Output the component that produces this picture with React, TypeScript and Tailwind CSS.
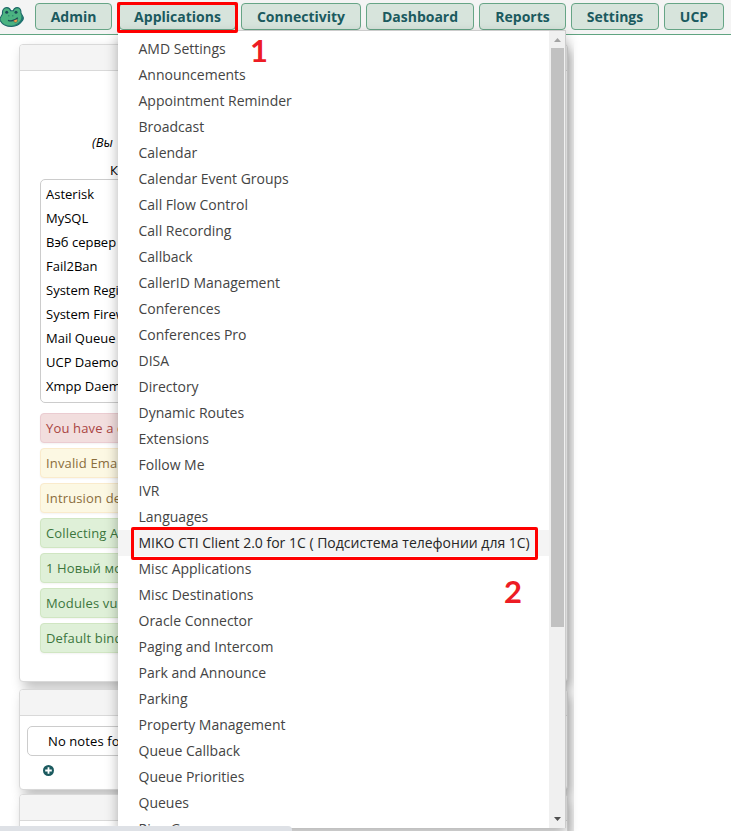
import React from "react";

const tabs = [
  { label: "Admin", width: "w-[77px]" },
  { label: "Applications", width: "w-[117px] ml-[2px]" },
  { label: "Connectivity", width: "w-[120px]" },
  { label: "Dashboard", width: "w-[108px]" },
  { label: "Reports", width: "w-[87px]" },
  { label: "Settings", width: "w-[88px]" },
  { label: "UCP", width: "w-[60px]" },
];

const modules = [
  "AMD Settings", "Announcements", "Appointment Reminder", "Broadcast", "Calendar",
  "Calendar Event Groups", "Call Flow Control", "Call Recording", "Callback",
  "CallerID Management", "Conferences", "Conferences Pro", "DISA", "Directory",
  "Dynamic Routes", "Extensions", "Follow Me", "IVR", "Languages",
  "MIKO CTI Client 2.0 for 1C ( Подсистема телефонии для 1С)", "Misc Applications",
  "Misc Destinations", "Oracle Connector", "Paging and Intercom", "Park and Announce",
  "Parking", "Property Management", "Queue Callback", "Queue Priorities", "Queues",
  "Ring Groups",
];

const services = [
  "Asterisk", "MySQL", "Вэб сервер", "Fail2Ban", "System Regi",
  "System Firew", "Mail Queue", "UCP Daemo", "Xmpp Daem",
];

const danger = "bg-[#f2dede] border-[#ebccd1] text-[#a94442]";
const warning = "bg-[#fcf8e3] border-[#faebcc] text-[#8a6d3b]";
const success = "bg-[#dff0d8] border-[#d0e6c2] text-[#3c763d]";

const alerts = [
  { text: "You have a d", tone: danger },
  { text: "Invalid Ema", tone: warning },
  { text: "Intrusion de", tone: warning },
  { text: "Collecting A", tone: success },
  { text: "1 Новый мо", tone: success },
  { text: "Modules vu", tone: success },
  { text: "Default bind", tone: success },
];

function Frog() {
  return (
    <svg className="block h-[24px] w-[25px]" viewBox="0 0 25 24">
      <path
        d="M2.5 9C2 5 4 2.6 6.800 2.600c2.200 0 3.400 1.400 3.900 3.200h2.600c.5-2 1.700-3.200 3.900-3.200 2.800 0 4 2.500 3.700 5.400l2.300 4.300c.3 1-.2 2.500-1 3.500-2.200 3.300-5.700 5.600-10.700 5.600C6.300 21.400 2 19 .2 15.400-.3 14 .2 12.500 1 11.500z"
        fill="#4bb381" stroke="#1d6668" strokeWidth="1.100"
      />
      <path d="M20.500 9c1.200 2 1.200 4 .2 6-1.600 3-4.400 4.600-8.700 5.600 5.500.2 9-2 10.700-5.300.6-1.200.5-2.200-.1-3.300z" fill="#1f7470" />
      <circle cx="6.700" cy="7.200" r="1.500" fill="#1b4a57" />
      <circle cx="16" cy="7.200" r="1.500" fill="#1b4a57" />
      <path d="M8.300 10.800h1M12.300 10.800h1" stroke="#1d6668" strokeWidth="1" />
      <path d="M8 15.300c3.500 1.200 7 .3 9.800-2.600" fill="none" stroke="#1b4a57" strokeWidth="1.300" />
      <path d="M13.400 15.400l3.600-1.500c1.100 1.700 0 3.700-1.600 3.500-1-.1-1.700-.9-2-2z" fill="#f5a04c" stroke="#1b4a57" strokeWidth=".5" />
    </svg>
  );
}

function Card({ className, children }: { className: string; children?: React.ReactNode }) {
  return (
    <section className={`w-[549px] shrink-0 rounded-[4px] border border-[#d9d9d9] bg-white shadow-[4px_6px_12px_rgba(0,0,0,0.25)] ${className}`}>
      <div className="h-[26px] rounded-t-[3px] border-b border-[#d9d9d9] bg-[#f4f4f4]" />
      {children}
    </section>
  );
}

export default function App() {
  return (
    <div className="relative h-[831px] w-[731px] overflow-hidden bg-white font-['Open_Sans',sans-serif] text-[13px] text-black">
      <header className="flex h-[35px] items-start border-b border-[#60a481] bg-[#f4f4f4]">
        <div className="w-[35px] shrink-0 pt-[5px]"><Frog /></div>
        <nav className="flex gap-[5px] pt-[3px]">
          {tabs.map((t) => (
            <button key={t.label} className={`h-[27px] shrink-0 rounded-[4px] border border-[#66a586] bg-[#d7e4dc] text-center text-[14px] leading-[25px] font-bold text-[#1b5a5f] ${t.width}`}>
              {t.label}
            </button>
          ))}
        </nav>
      </header>

      <main className="flex h-[796px] w-[574px] flex-col overflow-hidden pl-[19px] pt-[9px] whitespace-nowrap">
        <Card className="h-[638px]">
          <div className="pt-[61px] pl-[72px] leading-[20px] italic">(Вы</div>
          <div className="pt-[8px] pl-[90px] leading-[20px]">К</div>
          <div className="mx-[20px] mt-[-1px] h-[224px] rounded-[5px] border border-[#ccc] px-[5px] pt-[2px]">
            {services.map((s) => (
              <div key={s} className="h-[24px] leading-[24px]">{s}</div>
            ))}
          </div>
          <div className="mx-[20px] mt-[10px] flex flex-col gap-[5px]">
            {alerts.map((a) => (
              <div key={a.text} className={`h-[30px] rounded-[4px] border px-[5px] leading-[28px] tracking-[0.15px] shadow-[0_1px_2px_rgba(0,0,0,0.05)] ${a.tone}`}>
                {a.text}
              </div>
            ))}
          </div>
        </Card>
        <Card className="mt-[7px] h-[101px]">
          <div className="mx-[7px] mt-[10px] h-[30px] rounded-[5px] border border-[#ccc] pl-[20px] leading-[28px] tracking-[0.1px]">No notes fo</div>
          <svg className="mt-[9px] ml-[23px] h-[11px] w-[11px]" viewBox="0 0 11 11">
            <circle cx="5.5" cy="5.5" r="5.5" fill="#1b5a5f" />
            <path d="M5.5 2.2v6.6M2.2 5.5h6.6" stroke="#fff" strokeWidth="1.8" />
          </svg>
        </Card>
        <Card className="mt-[4px] h-[60px]" />
      </main>

      <div className="absolute top-[30px] left-[118px] flex h-[798px] w-[448px] border-t border-r border-[#ccc] bg-white shadow-[0_6px_12px_rgba(0,0,0,0.3)]">
        <ul className="h-[797px] w-[431px] overflow-hidden pt-[5px] text-[14px] text-[#444]">
          {modules.map((m, i) => (
            <li key={m} className={`h-[26px] pl-[20.5px] leading-[26px] whitespace-nowrap ${i === 19 ? "bg-[#f4f4f4] text-[#262626]" : ""}`}>{m}</li>
          ))}
        </ul>
        <div className="flex w-[16px] flex-col items-center justify-between bg-[#f0f0f0] pt-[7px] pb-[7px]">
          <svg className="h-[4px] w-[7px]" viewBox="0 0 7 4"><path d="M0 4L3.5 0 7 4z" fill="#a3a3a3" /></svg>
          <div className="mt-[6px] h-[579px] w-[13px] bg-[#c1c1c1]" />
          <div className="grow" />
          <svg className="h-[4px] w-[7px]" viewBox="0 0 7 4"><path d="M0 0h7L3.5 4z" fill="#505050" /></svg>
        </div>
      </div>

      <div className="absolute top-[2px] left-[117px] h-[31px] w-[121px] rounded-[2px] border-3 border-[#fe0000]" />
      <div className="absolute top-[527px] left-[131px] h-[33px] w-[407px] rounded-[2px] border-3 border-[#fe0000]" />
      <div className="absolute top-[32px] left-[250px] font-[Lato,sans-serif] text-[31px] leading-[36px] font-bold text-[#ed1c24]">1</div>
      <div className="absolute top-[573px] left-[504px] font-[Lato,sans-serif] text-[31px] leading-[36px] font-bold text-[#ed1c24]">2</div>
      <div className="absolute top-[826px] left-0 h-[5px] w-[292px] rounded-tr-[4px] bg-[#dee1e6]" />
    </div>
  );
}
